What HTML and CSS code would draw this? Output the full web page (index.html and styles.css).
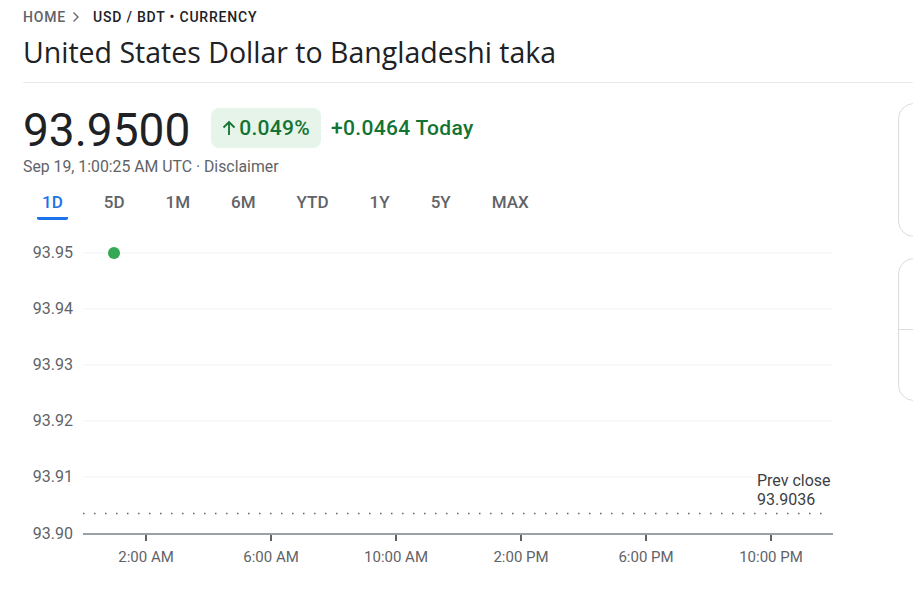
FILE: index.html
```html
<!DOCTYPE html>
<html lang="en">
<head>
    <meta charset="UTF-8">
    <meta name="viewport" content="width=device-width, initial-scale=1.0">
    <title>USD / BDT Currency</title>
    <link rel="stylesheet" href="styles.css">
</head>
<body>

<div id="page">
    <div class="crumbs">
        <span class="crumb-home">Home</span>
        <svg class="chevron" width="8" height="12" viewBox="0 0 8 12"><path d="M1.5 1.5 L6 6 L1.5 10.5" fill="none" stroke="#5f6368" stroke-width="1.3"/></svg>
        <span class="crumb-current">USD / BDT &bull; Currency</span>
    </div>
    <h1 class="title">United States Dollar to Bangladeshi taka</h1>
    <div class="divider"></div>

    <div class="main">
        <div class="left">
            <div class="quote">
                <div class="price">93.9500</div>
                <div class="badge">
                    <svg width="14" height="16" viewBox="0 0 14 16"><path d="M7 15 V2 M1.5 7.5 L7 2 L12.5 7.5" fill="none" stroke="#137333" stroke-width="1.8"/></svg>
                    <span>0.049%</span>
                </div>
                <div class="change">+0.0464 Today</div>
            </div>
            <div class="stamp">Sep 19, 1:00:25 AM UTC &middot; Disclaimer</div>

            <div class="tabs">
                <div class="tab active">1D</div>
                <div class="tab">5D</div>
                <div class="tab">1M</div>
                <div class="tab">6M</div>
                <div class="tab">YTD</div>
                <div class="tab">1Y</div>
                <div class="tab">5Y</div>
                <div class="tab">MAX</div>
            </div>

            <svg class="chart" width="810" height="340" viewBox="23 235 810 340">
                <g class="grid">
                    <line x1="83" y1="253" x2="833" y2="253"/>
                    <line x1="83" y1="309" x2="833" y2="309"/>
                    <line x1="83" y1="365" x2="833" y2="365"/>
                    <line x1="83" y1="421" x2="833" y2="421"/>
                    <line x1="83" y1="477" x2="833" y2="477"/>
                </g>
                <g class="ylabels">
                    <text x="73" y="258">93.95</text>
                    <text x="73" y="314">93.94</text>
                    <text x="73" y="370">93.93</text>
                    <text x="73" y="426">93.92</text>
                    <text x="73" y="482">93.91</text>
                    <text x="73" y="539">93.90</text>
                </g>
                <line class="prev" x1="83" y1="513.5" x2="830" y2="513.5"/>
                <line class="axis" x1="83" y1="534" x2="833" y2="534"/>
                <g class="ticks">
                    <line x1="146" y1="535" x2="146" y2="541"/>
                    <line x1="271" y1="535" x2="271" y2="541"/>
                    <line x1="396" y1="535" x2="396" y2="541"/>
                    <line x1="521" y1="535" x2="521" y2="541"/>
                    <line x1="646" y1="535" x2="646" y2="541"/>
                    <line x1="771" y1="535" x2="771" y2="541"/>
                </g>
                <g class="xlabels">
                    <text x="146" y="562">2:00 AM</text>
                    <text x="271" y="562">6:00 AM</text>
                    <text x="396" y="562">10:00 AM</text>
                    <text x="521" y="562">2:00 PM</text>
                    <text x="646" y="562">6:00 PM</text>
                    <text x="771" y="562">10:00 PM</text>
                </g>
                <text class="prev-label" x="757" y="486">Prev close</text>
                <text class="prev-label" x="757" y="505">93.9036</text>
                <circle class="point" cx="114" cy="253" r="6"/>
            </svg>
        </div>

        <div class="right">
            <div class="card card-top"></div>
            <div class="card card-split">
                <div class="card-row"></div>
                <div class="card-row"></div>
            </div>
        </div>
    </div>
</div>

</body>
</html>
```

FILE: styles.css
```css
body {
    font-family: 'Roboto', 'Liberation Sans', sans-serif;
    background-color: #fff;
    color: #202124;
    margin: 0;
    overflow: hidden;
}

#page {
    padding-left: 23px;
}

.crumbs {
    display: flex;
    align-items: center;
    margin-top: 7px;
    font-size: 14px;
    line-height: 20px;
    font-weight: 500;
    letter-spacing: 0.8px;
    text-transform: uppercase;
}

.crumb-home {
    color: #5f6368;
}

.chevron {
    margin: 0 13px 0 6px;
}

.crumb-current {
    color: #202124;
}

.title {
    margin: 7px 0 0;
    font-family: 'Open Sans', 'Roboto', sans-serif;
    font-size: 28.5px;
    line-height: 36px;
    font-weight: 400;
    color: #202124;
}

.divider {
    height: 1px;
    margin-top: 12px;
    background-color: #e8eaed;
}

.main {
    display: flex;
    gap: 64px;
}

.left {
    width: 811px;
    flex-shrink: 0;
}

.quote {
    display: flex;
    align-items: center;
    margin-top: 19px;
    height: 52px;
}

.price {
    margin-top: 4px;
    font-size: 46px;
    line-height: 48px;
    color: #202124;
}

.badge {
    display: flex;
    align-items: center;
    gap: 3px;
    margin-left: 21px;
    height: 40px;
    padding: 0 11px;
    border-radius: 8px;
    background-color: #e6f4ea;
    color: #137333;
    font-size: 21px;
    font-weight: 500;
    letter-spacing: 0.3px;
}

.change {
    margin-left: 10px;
    color: #137333;
    font-size: 21px;
    font-weight: 500;
    letter-spacing: 0.3px;
}

.stamp {
    margin-top: 3px;
    font-size: 15.8px;
    line-height: 20px;
    color: #5f6368;
}

.tabs {
    display: flex;
    gap: 31px;
    margin-top: 13px;
    padding-left: 14px;
}

.tab {
    padding: 0 5px 3px;
    font-size: 17px;
    line-height: 24px;
    font-weight: 500;
    color: #5f6368;
    border-bottom: 3px solid transparent;
}

.tab.active {
    color: #1a73e8;
    border-bottom-color: #1a73e8;
    border-radius: 2px;
}

.chart {
    display: block;
    margin-top: 15px;
}

.grid line {
    stroke: #f1f3f4;
    stroke-width: 1;
}

.ylabels text {
    font-size: 16px;
    fill: #5f6368;
    text-anchor: end;
}

.xlabels text {
    font-size: 15px;
    fill: #5f6368;
    text-anchor: middle;
}

.axis {
    stroke: #9aa0a6;
    stroke-width: 2;
}

.ticks line {
    stroke: #5f6368;
    stroke-width: 2;
}

.prev {
    stroke: #5f6368;
    stroke-width: 1.5;
    stroke-dasharray: 1.5 9.5;
}

.prev-label {
    font-size: 16px;
    fill: #3c4043;
}

.point {
    fill: #34a853;
}

.right {
    display: flex;
    flex-direction: column;
    gap: 21px;
    padding-top: 20px;
}

.card {
    width: 340px;
    border: 1px solid #dadce0;
    border-radius: 16px;
}

.card-top {
    height: 132px;
}

.card-split {
    height: 141px;
    display: flex;
    flex-direction: column;
}

.card-row {
    flex: 1;
}

.card-row + .card-row {
    border-top: 1px solid #dadce0;
}
```
